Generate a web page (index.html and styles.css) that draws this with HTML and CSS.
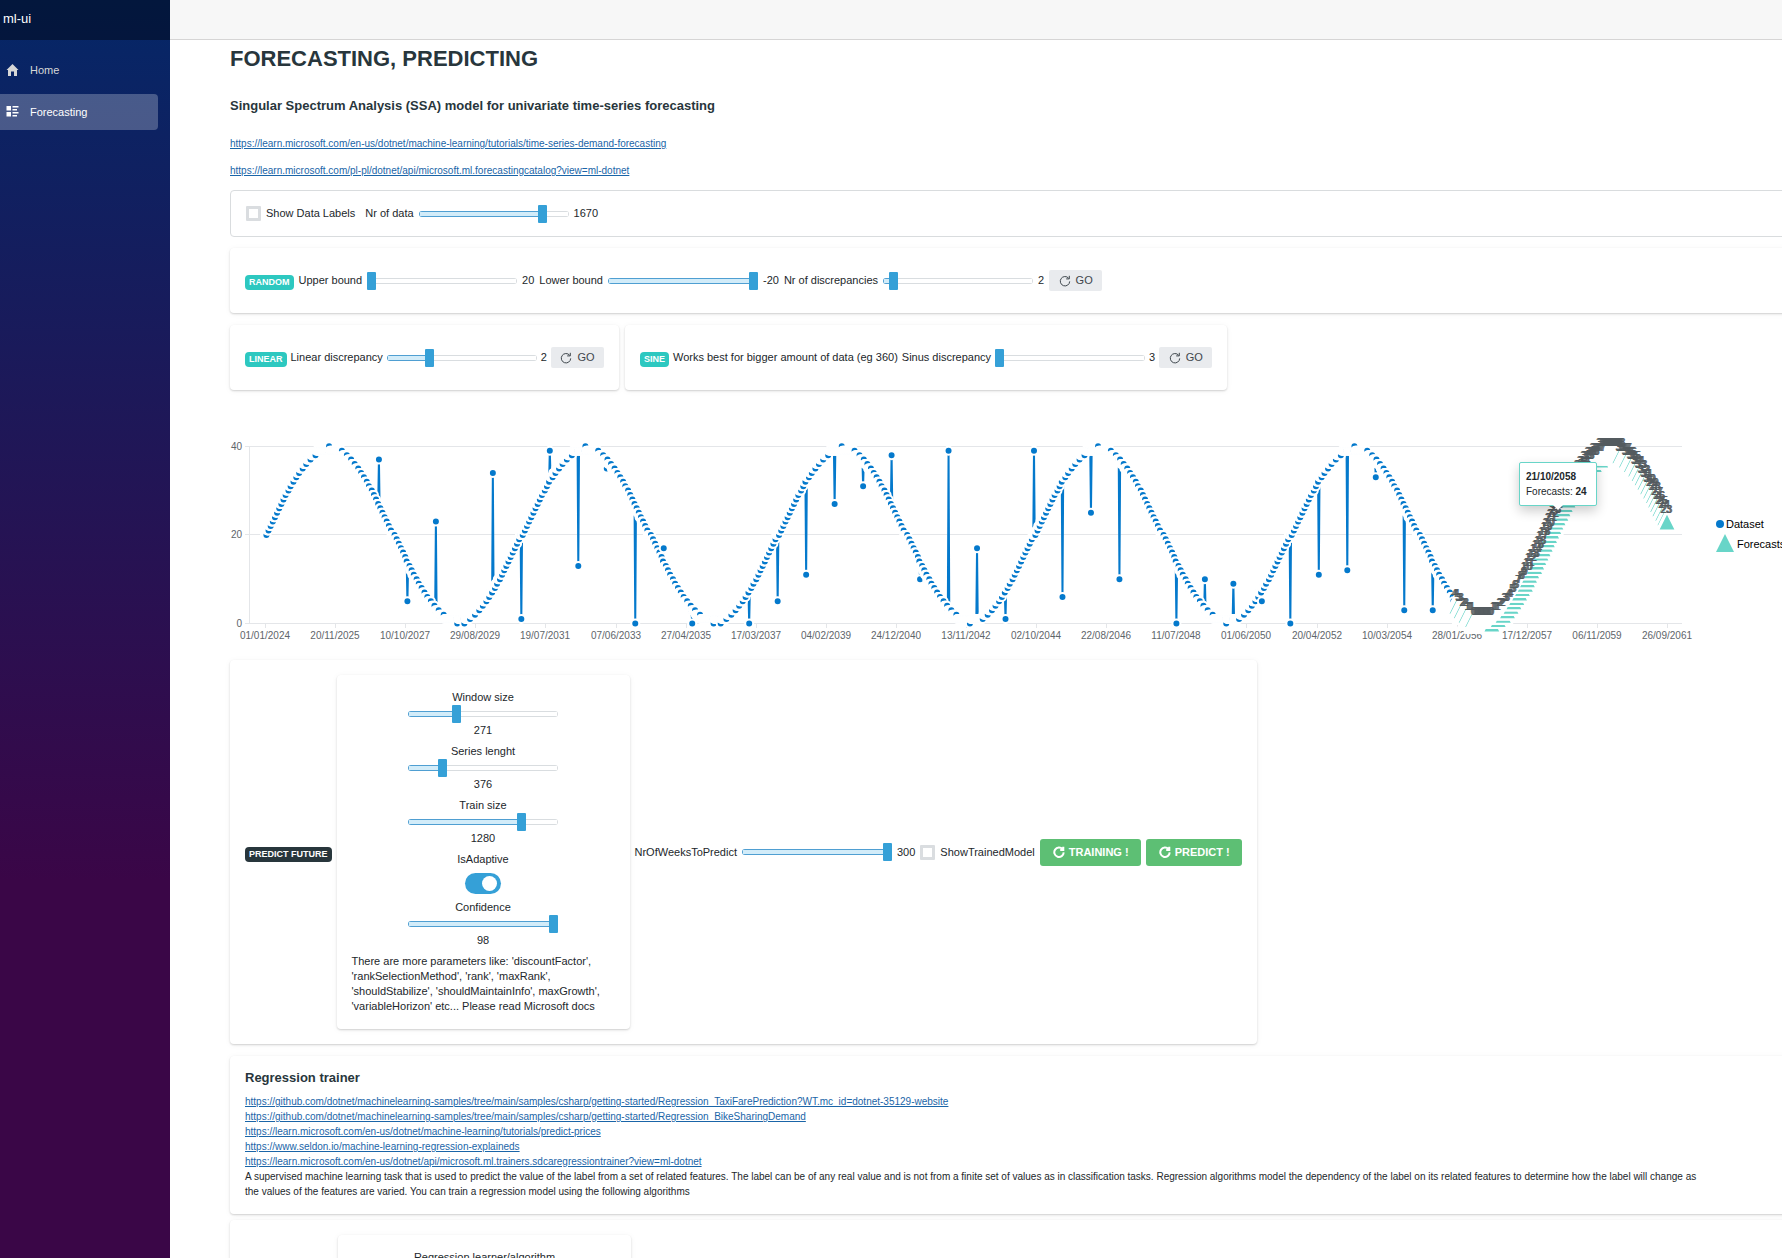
FILE: index.html
```html
<!DOCTYPE html>
<html lang="en">
<head>
<meta charset="utf-8">
<title>ml-ui</title>
<link rel="stylesheet" href="styles.css">
</head>
<body>
<svg class="defs" aria-hidden="true">
  <symbol id="reload" viewBox="0 0 12 12"><path d="M9.6 3.2A4.7 4.7 0 1 0 10.7 6.4M10.3 .8V3.9H7.2" fill="none" stroke="currentColor"/></symbol>
</svg>
<div class="app">
  <aside class="sidebar">
    <div class="brand"><a href="#">ml-ui</a></div>
    <nav class="nav">
      <a class="nav-item" href="#home"><svg class="nav-icon" viewBox="0 0 8 8"><path d="M4 0L0 4h1v4h2V5h2v3h2V4h1z" fill="currentColor"/></svg>Home</a>
      <a class="nav-item active" href="#forecasting"><svg class="nav-icon" viewBox="0 0 8 8"><path d="M0 0v3h3V0zM4 0v1h4V0zM4 2v1h3V2zM0 4v3h3V4zM4 4v1h4V4zM4 6v1h3V6z" fill="currentColor"/></svg>Forecasting</a>
    </nav>
  </aside>
  <div class="page">
    <header class="topbar"></header>
    <main class="content">
      <h1>FORECASTING, PREDICTING</h1>
      <h2>Singular Spectrum Analysis (SSA) model for univariate time-series forecasting</h2>
      <p class="ref"><a href="#">https://learn.microsoft.com/en-us/dotnet/machine-learning/tutorials/time-series-demand-forecasting</a></p>
      <p class="ref"><a href="#">https://learn.microsoft.com/pl-pl/dotnet/api/microsoft.ml.forecastingcatalog?view=ml-dotnet</a></p>

      <section class="card outlined row">
        <input type="checkbox" id="labels"><label for="labels" class="wide">Show Data Labels</label>
        <label for="count">Nr of data</label><input type="range" id="count" value="85" style="--fill:124px"><output>1670</output>
      </section>

      <section class="card tall row">
        <span class="badge">RANDOM</span>
        <label for="upper">Upper bound</label><input type="range" id="upper" value="0" style="--fill:0px"><output>20</output>
        <label for="lower">Lower bound</label><input type="range" id="lower" value="100" style="--fill:146px"><output>-20</output>
        <label for="disc">Nr of discrepancies</label><input type="range" id="disc" value="4" style="--fill:10px"><output>2</output>
        <button class="go"><svg class="reload"><use href="#reload"/></svg>GO</button>
      </section>

      <div class="pair">
        <section class="card tall row">
          <span class="badge">LINEAR</span>
          <label for="linear">Linear discrepancy</label><input type="range" id="linear" value="27" style="--fill:42px"><output>2</output>
          <button class="go"><svg class="reload"><use href="#reload"/></svg>GO</button>
        </section>
        <section class="card tall row">
          <span class="badge">SINE</span>
          <span>Works best for bigger amount of data (eg 360)</span>
          <label for="sinus">Sinus discrepancy</label><input type="range" id="sinus" value="0" style="--fill:0px"><output>3</output>
          <button class="go"><svg class="reload"><use href="#reload"/></svg>GO</button>
        </section>
      </div>

      <div class="chart">
        <svg id="plot" class="plot" role="img" aria-label="Dataset and forecasts"></svg>
        <div class="tooltip"><b>21/10/2058</b><br>Forecasts: <b>24</b></div>
      </div>

      <section class="card row predict">
        <span class="badge dark">PREDICT FUTURE</span>
        <div class="card params">
          <div class="param"><label for="window">Window size</label><input type="range" id="window" value="31" style="--fill:48px"><output>271</output></div>
          <div class="param"><label for="series">Series lenght</label><input type="range" id="series" value="21" style="--fill:33px"><output>376</output></div>
          <div class="param"><label for="train">Train size</label><input type="range" id="train" value="77" style="--fill:113px"><output>1280</output></div>
          <div class="param switch-param"><label for="adaptive">IsAdaptive</label><input type="checkbox" class="switch" id="adaptive" checked></div>
          <div class="param"><label for="conf">Confidence</label><input type="range" id="conf" value="100" style="--fill:146px"><output>98</output></div>
          <p class="note">There are more parameters like: 'discountFactor',<br>'rankSelectionMethod', 'rank', 'maxRank',<br>'shouldStabilize', 'shouldMaintainInfo', maxGrowth',<br>'variableHorizon' etc... Please read Microsoft docs</p>
        </div>
        <label for="weeks">NrOfWeeksToPredict</label><input type="range" id="weeks" value="100" style="--fill:146px"><output>300</output>
        <input type="checkbox" id="trained"><label for="trained">ShowTrainedModel</label>
        <button class="run"><svg class="reload bold"><use href="#reload"/></svg>TRAINING !</button>
        <button class="run"><svg class="reload bold"><use href="#reload"/></svg>PREDICT !</button>
      </section>

      <section class="card regression">
        <h3>Regression trainer</h3>
        <a href="#">https://github.com/dotnet/machinelearning-samples/tree/main/samples/csharp/getting-started/Regression_TaxiFarePrediction?WT.mc_id=dotnet-35129-website</a><br>
        <a href="#">https://github.com/dotnet/machinelearning-samples/tree/main/samples/csharp/getting-started/Regression_BikeSharingDemand</a><br>
        <a href="#">https://learn.microsoft.com/en-us/dotnet/machine-learning/tutorials/predict-prices</a><br>
        <a href="#">https://www.seldon.io/machine-learning-regression-explaineds</a><br>
        <a href="#">https://learn.microsoft.com/en-us/dotnet/api/microsoft.ml.trainers.sdcaregressiontrainer?view=ml-dotnet</a><br>
        A supervised machine learning task that is used to predict the value of the label from a set of related features. The label can be of any real value and is not from a finite set of values as in classification tasks. Regression algorithms model the dependency of the label on its related features to determine how the label will change as<br>
        the values of the features are varied. You can train a regression model using the following algorithms
      </section>

      <section class="card learner">
        <div class="card params"><div class="param">Regression learner/algorithm</div></div>
      </section>
    </main>
  </div>
</div>
<script src="chart.js"></script>
</body>
</html>
```
FILE: styles.css
```css
* { box-sizing: border-box; }
body {
  margin: 0;
  font: 11px/15px "Liberation Sans", Arial, sans-serif;
  color: #22272b;
  background: #fff;
}
h1, h2, h3 { margin: 0; color: #28363c; font-weight: bold; }
a { color: #1a65a8; }
button, input { font: inherit; margin: 0; }
.defs { position: absolute; width: 0; height: 0; }

.app { display: flex; height: 100vh; overflow: hidden; }
.sidebar {
  flex: 0 0 170px;
  background: linear-gradient(180deg, #052767 0%, #3a0647 70%);
}
.brand {
  display: flex;
  align-items: center;
  height: 40px;
  padding: 0 3px 4px;
  background: rgba(0, 0, 0, .4);
  font-size: 13px;
}
.brand a { color: #fff; text-decoration: none; }
.nav { display: flex; flex-direction: column; gap: 6px; padding: 12px 12px 0 0; }
.nav-item {
  display: flex;
  align-items: center;
  gap: 11px;
  height: 36px;
  padding-left: 6px;
  border-radius: 0 4px 4px 0;
  color: #d7d7d7;
  text-decoration: none;
}
.nav-item.active { background: rgba(255, 255, 255, .25); color: #fff; }
.nav-icon { width: 13px; height: 12px; }

.page { flex: 1; min-width: 0; }
.topbar { height: 40px; background: #f7f7f7; border-bottom: 1px solid #d6d5d5; }
.content { margin-right: -20px; padding-left: 60px; }

h1 { padding: 5px 0; font-size: 22px; line-height: 28px; }
h2 { padding: 17px 0 15px; font-size: 13px; line-height: 22px; }
.ref { margin: 4px 0 12px; font-size: 10px; }

.card {
  background: #fff;
  border-radius: 4px;
  box-shadow: 0 1px 2px rgba(0, 0, 0, .16), 0 1px 6px rgba(0, 0, 0, .05);
  padding: 15px;
}
.row { display: flex; align-items: center; gap: 5px; white-space: nowrap; }
.outlined { height: 47px; border: 1px solid #d9dcde; box-shadow: none; }
.wide { margin-right: 5px; }
.tall { height: 65px; margin-top: 11px; }
.pair { display: flex; gap: 6px; padding-top: 1px; }
.pair .row { gap: 4px; }

.badge {
  margin-top: 4px;
  padding: 0 4px;
  border-radius: 4px;
  background: #2dc8c0;
  color: #fff;
  font-size: 9px;
  font-weight: bold;
}
.badge.dark { background: #28363c; }

input[type=range] {
  appearance: none;
  flex: none;
  width: 150px;
  height: 18px;
  background: none;
}
input[type=range]::-webkit-slider-runnable-track {
  height: 6px;
  border-radius: 3px;
  background:
    linear-gradient(#d2ecf9, #d2ecf9) 1px 1px / calc(var(--fill) - 1px) 4px no-repeat,
    linear-gradient(#fff, #fff) 1px 1px / calc(100% - 2px) 4px no-repeat,
    linear-gradient(#4f9fd2, #4f9fd2) 0 0 / var(--fill) 6px no-repeat,
    #d9dde0;
}
input[type=range]::-webkit-slider-thumb {
  appearance: none;
  width: 9px;
  height: 18px;
  margin-top: -6px;
  border-radius: 1px;
  background: #35a0d7;
}
input[type=checkbox] {
  appearance: none;
  flex: none;
  width: 15px;
  height: 15px;
  border: 3px solid #dadde0;
  border-radius: 1px;
  background: #fff;
}
input.switch {
  display: flex;
  justify-content: flex-end;
  align-items: center;
  width: 36px;
  height: 21px;
  padding: 0 4px;
  border: 0;
  border-radius: 11px;
  background: #35a0d7;
}
input.switch::after { content: ""; width: 15px; height: 15px; border-radius: 50%; background: #fff; }

button { display: flex; align-items: center; justify-content: center; border: 0; white-space: nowrap; }
.go { gap: 5px; width: 53px; height: 21px; padding: 0; border-radius: 2px; background: #e9ebee; color: #3e464c; }
.run {
  gap: 4px;
  height: 27px;
  padding: 0 12px 0 13px;
  border-radius: 3px;
  background: #5dbf74;
  color: #fff;
  font-weight: bold;
}
.reload { width: 12px; height: 12px; }
.bold { stroke-width: 2; }

.chart { position: relative; height: 260px; }
.plot { display: block; width: 100%; height: 260px; overflow: visible; }
.plot text { font-size: 10px; }
.plot .legend text { font-size: 11px; }
.axis text { fill: #60656a; }
.grid { stroke: #e4e6e9; }
.labels text { fill: #545b5f; text-anchor: middle; }
.tooltip {
  position: absolute;
  left: 1289px;
  top: 72px;
  width: 78px;
  padding: 6px;
  border: 1px solid #68d5c8;
  border-radius: 2px;
  background: #fff;
  box-shadow: 0 5px 12px rgba(0, 0, 0, .2);
  font-size: 10px;
  white-space: nowrap;
}
.tooltip::after {
  content: "";
  position: absolute;
  left: 33px;
  top: 100%;
  border: 5px solid transparent;
  border-top-color: #fff;
}

.predict { width: fit-content; margin-top: 10px; }
.params { display: flex; flex-direction: column; align-items: center; gap: 6px; width: 293px; }
.param { display: flex; flex-direction: column; align-items: center; }
.switch-param { gap: 6px; }
.note { margin: 0; align-self: stretch; }
.regression { margin-top: 12px; padding-top: 11px; font-size: 10px; white-space: nowrap; }
h3 { font-size: 13px; line-height: 22px; margin-bottom: 5px; }
.learner { margin-top: 6px; padding-left: 108px; }
```
FILE: chart.js
```js
const NS = "http://www.w3.org/2000/svg";
const plot = document.getElementById("plot");
const left = 35, step = 1402 / 1969, zero = 233.5, unit = 4.43;
const px = i => left + i * step;
const py = v => zero - v * unit;

function add(parent, tag, attrs, text) {
  const el = document.createElementNS(NS, tag);
  for (const k in attrs) el.setAttribute(k, attrs[k]);
  if (text !== undefined) el.textContent = text;
  parent.appendChild(el);
  return el;
}

// axes
const axis = add(plot, "g", { class: "axis" });
for (const v of [0, 20, 40]) {
  const y = Math.floor(py(v)) + 0.5;
  add(axis, "path", { class: "grid", d: `M15 ${y}H1452` });
  add(axis, "text", { x: 12, y: y + 3.5, "text-anchor": "end" }, v);
}
add(axis, "path", { class: "grid", d: "M19.5 56V234" });
["01/01/2024", "20/11/2025", "10/10/2027", "29/08/2029", "19/07/2031", "07/06/2033", "27/04/2035",
 "17/03/2037", "04/02/2039", "24/12/2040", "13/11/2042", "02/10/2044", "22/08/2046", "11/07/2048",
 "01/06/2050", "20/04/2052", "10/03/2054", "28/01/2056", "17/12/2057", "06/11/2059", "26/09/2061"
].forEach((d, k) => {
  const x = Math.round(left + k * 70.1);
  add(axis, "path", { class: "grid", d: `M${x}.5 233v5` });
  add(axis, "text", { x, y: 249, "text-anchor": "middle" }, d);
});

// dataset: truncated sine with a discrepancy at every 40th week
const odd = { 4: 37, 5: 5, 6: 23, 7: 0, 8: 34, 9: 1, 10: 39, 11: 13, 12: 35, 13: 0, 14: 17, 15: 0, 16: 0,
  17: 0, 18: 5, 19: 11, 20: 27, 21: 31, 22: 38, 23: 10, 24: 39, 25: 17, 26: 1, 27: 39, 28: 6, 29: 25,
  30: 10, 32: 0, 33: 10, 34: 9, 35: 5, 36: 0, 37: 11, 38: 12, 39: 33, 40: 3, 41: 3 };
const data = [];
for (let i = 0; i < 1670; i++) {
  const k = i / 40;
  const s = Math.sin(i * Math.PI / 180);
  data.push(k in odd ? odd[k] : 20 + Math.trunc(20 * s + Math.sign(s) * 1e-9));
}
add(plot, "path", { d: "M" + data.map((v, i) => px(i) + " " + py(v)).join("L"), fill: "none", stroke: "#0479cc", "stroke-width": 2 });
const dots = add(plot, "g", { fill: "#0479cc", stroke: "#fff", "stroke-width": 2 });
data.forEach((v, i) => add(dots, "circle", { cx: px(i), cy: py(v), r: 4 }));

// forecasts
const tri = add(plot, "g", { fill: "#68d5c8", stroke: "#fff", "stroke-width": 2 });
const labels = add(plot, "g", { class: "labels" });
for (let i = 1670; i < 1970; i++) {
  const v = Math.round(19 + 19 * Math.sin(i * Math.PI / 180));
  const x = px(i), y = py(v);
  add(tri, "path", { d: `M${x} ${y - 9}l9 18h-18z` });
  add(labels, "text", { x, y: y - 9 }, v);
}

// legend
const legend = add(plot, "g", { class: "legend" });
add(legend, "circle", { cx: 1490, cy: 134, r: 4, fill: "#0479cc" });
add(legend, "text", { x: 1496, y: 138 }, "Dataset");
add(legend, "path", { d: "M1495 144l9 18h-18z", fill: "#68d5c8" });
add(legend, "text", { x: 1507, y: 158 }, "Forecasts");
```
